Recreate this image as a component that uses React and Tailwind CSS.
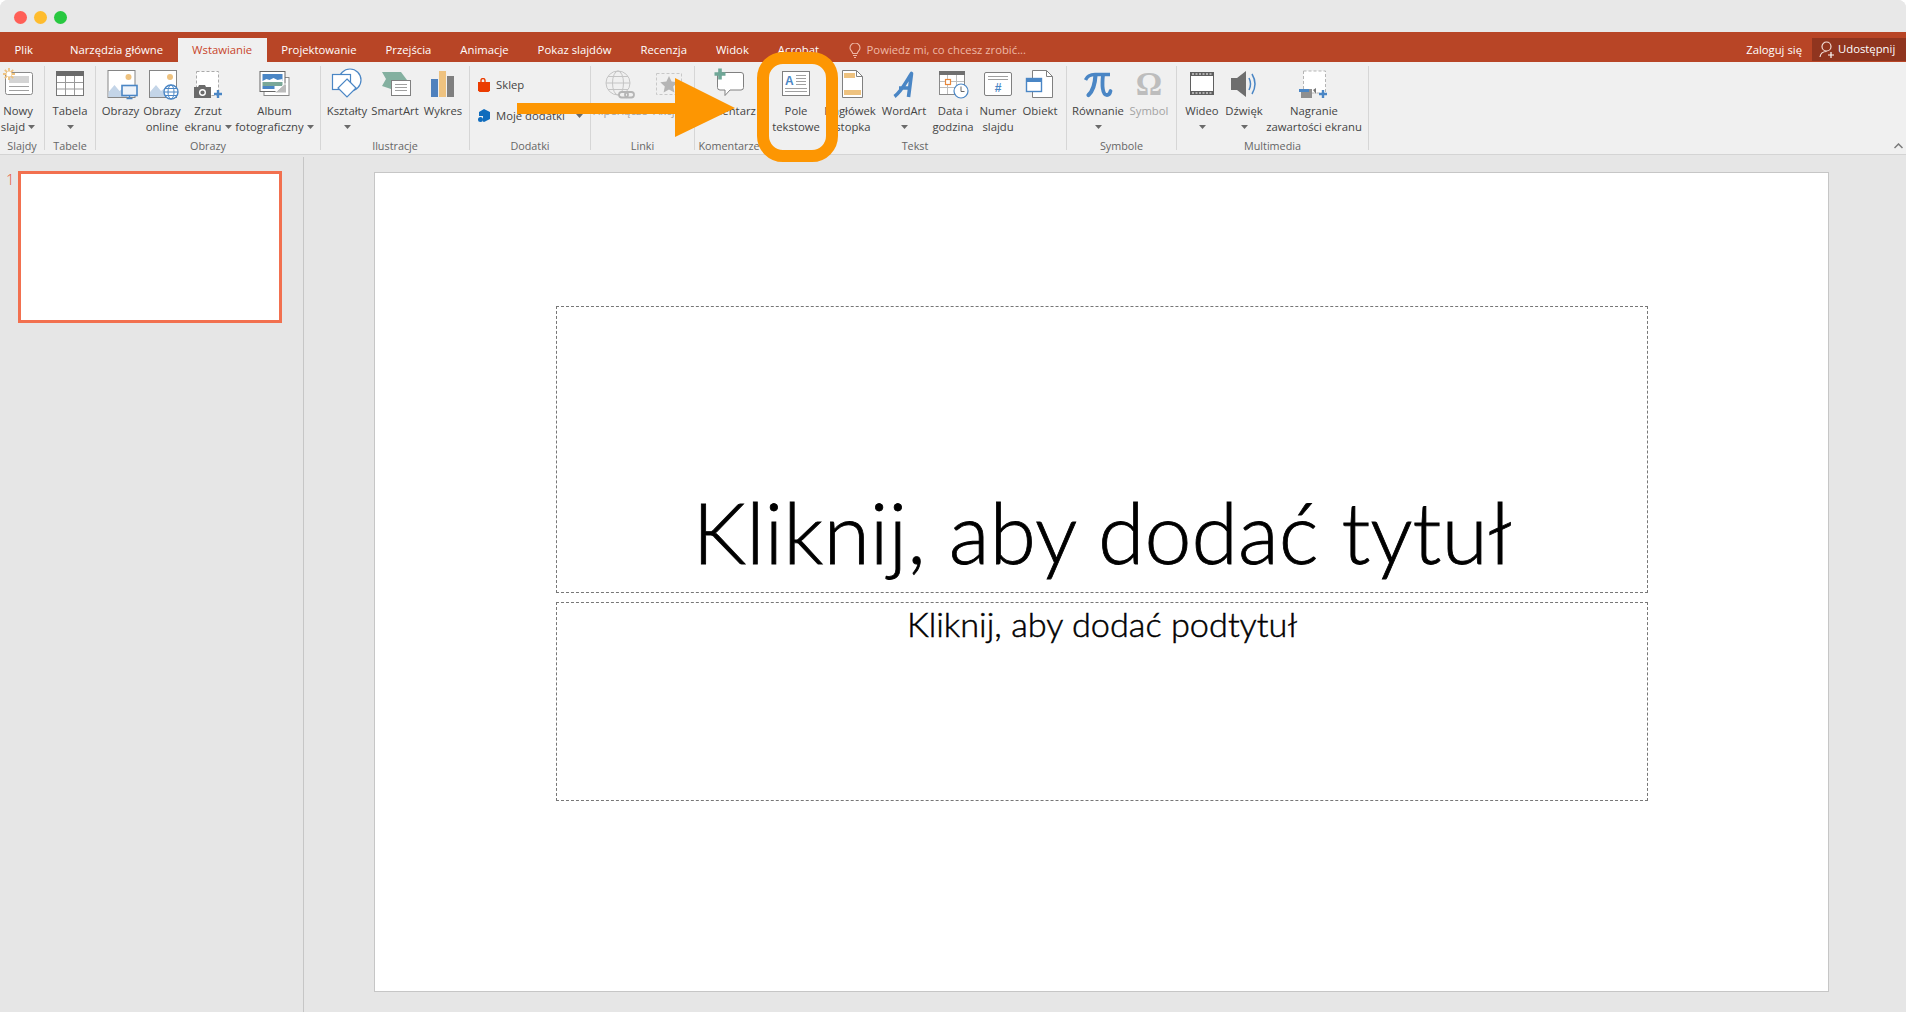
import React from "react";

const B = "#4a86c5";
const Y = "#eec27f";
const LB = "#c4d5e8";

function Caret() {
  return (
    <svg width="7" height="4" viewBox="0 0 7 4" className="shrink-0">
      <path d="M0 0h7L3.5 4z" fill="#6a6a6a" />
    </svg>
  );
}

function Lines({ x1, x2, ys, c = "#a0a0a0" }) {
  return ys.map((y) => <path key={y} d={`M${x1} ${y}H${x2}`} stroke={c} strokeWidth="1" />);
}

function Item({ w, cx, lines, caret, disabled, children }) {
  const color = disabled ? "text-[#a3a3a3]" : "text-[#444444]";
  return (
    <div className={`flex flex-col items-center shrink-0 ${color}`} style={{ width: w }}>
      <svg width="60" height="36" viewBox={`${cx - 30} 66 60 36`} className="shrink-0 overflow-visible mb-[1px]">
        {children}
      </svg>
      {lines.map((l, i) => (
        <div key={i} className="h-[16px] leading-[16px] whitespace-nowrap flex items-center gap-[3px]">
          <span>{l}</span>
          {caret === "inline" && i === lines.length - 1 && <Caret />}
        </div>
      ))}
      {caret === "below" && (
        <div className="h-[16px] flex items-center">
          <Caret />
        </div>
      )}
    </div>
  );
}

function Group({ w, label, children }) {
  return (
    <div className="h-[84px] shrink-0 flex flex-col border-r border-[#d6d6d6]" style={{ width: w }}>
      <div className="flex flex-1 min-h-0">{children}</div>
      <div className="h-[12px] leading-[16px] text-center text-[#666666] text-[10.8px] whitespace-nowrap">{label}</div>
    </div>
  );
}

function Frame({ x, sunX }) {
  return (
    <>
      <rect x={x + 0.5} y="70.5" width="27" height="27" fill="#fff" stroke="#858585" />
      <circle cx={sunX} cy="77" r="3" fill={Y} />
      <path d={`M${x + 1} 97V92l6-7 5 6 4-3 4 9z`} fill={LB} />
    </>
  );
}

function Ribbon() {
  return (
    <div className="h-[93px] shrink-0 bg-[#f0f0f0] border-b border-[#d4d4d4] pt-[4px] flex relative text-[11.3px]">
      <Group w={45} label="Slajdy">
        <Item w={36} cx={18} lines={["Nowy", "slajd"]} caret="inline">
          <rect x="5.5" y="72.5" width="27" height="22" rx="2" fill="#fff" stroke="#8a8a8a" />
          <rect x="9" y="76" width="20" height="7" fill="#d4d4d4" />
          <Lines x1={9} x2={29} ys={[86.5, 90.5]} />
          <path d="M9 68v12M3 74h12M4.8 69.8l8.4 8.4M13.2 69.8l-8.4 8.4" stroke={Y} strokeWidth="1.8" />
          <circle cx="9" cy="74" r="2.5" fill="#fff" />
        </Item>
      </Group>
      <Group w={51} label="Tabele">
        <Item w={50} cx={70} lines={["Tabela"]} caret="below">
          <rect x="56.5" y="71.5" width="27" height="24" fill="#fff" stroke="#777" />
          <rect x="56" y="71" width="28" height="5" fill="#6b6b6b" />
          <path d="M65.5 76v19M74.5 76v19M57 82.5h26M57 89h26" stroke="#9a9a9a" />
        </Item>
      </Group>
      <Group w={225} label="Obrazy">
        <div className="w-[4px] shrink-0" />
        <Item w={41} cx={120.5} lines={["Obrazy"]}>
          <Frame x={107} sunX={128} />
          <rect x="121.5" y="85.5" width="15" height="10" fill="#eef3f9" stroke={B} strokeWidth="1.6" />
          <path d="M129 96v2M126 98.5h6" stroke={B} strokeWidth="1.4" />
        </Item>
        <Item w={42} cx={162} lines={["Obrazy", "online"]}>
          <Frame x={149} sunX={170} />
          <circle cx="171" cy="92" r="7" fill="#fff" stroke={B} strokeWidth="1.4" />
          <ellipse cx="171" cy="92" rx="3" ry="7" fill="none" stroke={B} />
          <path d="M164 92h14M165 88.5h12M165 95.5h12" stroke={B} />
        </Item>
        <Item w={50} cx={208} lines={["Zrzut", "ekranu"]} caret="inline">
          <rect x="196.5" y="71.5" width="22" height="24" fill="#fff" stroke="#aaa" strokeDasharray="3 2" />
          <path d="M194 87h4l1-2h6l1 2h5v11h-17z" fill="#6b6b6b" />
          <circle cx="202.5" cy="92.5" r="2.8" fill="none" stroke="#fff" strokeWidth="1.4" />
          <path d="M214 94h8M218 90v8" stroke={B} strokeWidth="2.4" />
        </Item>
        <Item w={83} cx={274.5} lines={["Album", "fotograficzny"]} caret="inline">
          <rect x="263.5" y="77.5" width="25" height="18" fill="#fff" stroke="#888" />
          <rect x="259.5" y="71.5" width="25" height="20" fill="#fff" stroke="#666" />
          <rect x="262" y="74" width="20" height="7" fill={B} />
          <path d="M262 81l4-2 3 1 4-2 4 2 5-1v3h-20z" fill="#fff" />
          <rect x="262" y="82" width="20" height="4" fill="#7aa898" />
          <rect x="262" y="86" width="12" height="3" fill={B} />
          <path d="M274 93l10-9h2v9z" fill="#bbb" stroke="#fff" />
        </Item>
      </Group>
      <Group w={149} label="Ilustracje">
        <Item w={52} cx={347} lines={["Kształty"]} caret="below">
          <circle cx="350" cy="80" r="11" fill="#fff" stroke={B} strokeWidth="1.2" />
          <rect x="332.5" y="74.5" width="18" height="15" fill="#fff" stroke={B} strokeWidth="1.2" />
          <path d="M347 79l9 9-9 9-9-9z" fill="#fff" stroke={B} strokeWidth="1.2" />
        </Item>
        <Item w={44} cx={395} lines={["SmartArt"]}>
          <path d="M382 72h19l6 8h-16v9l-9-3 4-7z" fill="#84b0a0" />
          <rect x="391.5" y="80.5" width="19" height="15" fill="#fff" stroke="#808080" />
          <Lines x1={395} x2={407} ys={[84.5, 87.5, 90.5]} />
        </Item>
        <Item w={52} cx={443} lines={["Wykres"]}>
          <rect x="431" y="79" width="7" height="18" fill="#4f81bd" />
          <rect x="439" y="71" width="7" height="26" fill={Y} />
          <rect x="447" y="76" width="7" height="21" fill="#7f7f7f" />
        </Item>
      </Group>
      <Group w={121} label="Dodatki">
        <div className="flex flex-col pl-[8px] pt-[11px] gap-[15px] text-[#444444]">
          <div className="h-[16px] flex items-center gap-[6px]">
            <svg width="12" height="14" viewBox="0 0 12 14">
              <path d="M0 4h12v8.500L10.500 14H1.500L0 12.500z" fill="#eb3c00" />
              <path d="M3 5V2.500a2 2 0 0 1 4 0V5" fill="none" stroke="#eb3c00" strokeWidth="1.400" />
            </svg>
            <span className="leading-[16px]">Sklep</span>
          </div>
          <div className="h-[16px] flex items-center gap-[6px] relative">
            <svg width="12" height="14" viewBox="0 0 12 14">
              <path d="M6 0l6 3v7l-6 3-1-.5V7H1V3z" fill="#0f6cbd" />
              <circle cx="2.500" cy="10.500" r="2.500" fill="#0f6cbd" />
            </svg>
            <span className="leading-[16px] whitespace-nowrap">Moje dodatki</span>
            <div className="ml-[5px]"><Caret /></div>
          </div>
        </div>
      </Group>
      <Group w={104} label="Linki">
        <Item w={58} cx={620} lines={["Hiperłącze"]} disabled>
          <circle cx="618" cy="83" r="12" fill="none" stroke="#c4c4c4" />
          <ellipse cx="618" cy="83" rx="5.500" ry="12" fill="none" stroke="#c4c4c4" />
          <path d="M606 83h24M608 76.500h20M608 89.500h20" stroke="#c4c4c4" />
          <rect x="619" y="92" width="9" height="5.500" rx="2.700" fill="#f0f0f0" stroke="#b5b5b5" strokeWidth="1.800" />
          <rect x="625" y="92" width="9" height="5.500" rx="2.700" fill="none" stroke="#b5b5b5" strokeWidth="1.800" />
        </Item>
        <Item w={36} cx={667} lines={["Akcja"]} disabled>
          <rect x="656.500" y="73.500" width="25" height="21" fill="none" stroke="#c8c8c8" strokeDasharray="3 2" />
          <path d="M669 76l2.600 5.600 6.100.7-4.500 4.200 1.200 6-5.400-3-5.400 3 1.200-6-4.500-4.200 6.100-.7z" fill="#b5b5b5" />
        </Item>
      </Group>
      <Group w={69} label="Komentarze">
        <Item w={64} cx={727} lines={["Komentarz"]}>
          <path d="M720 72.500h21a2.500 2.500 0 0 1 2.500 2.500v12.500a2.500 2.500 0 0 1-2.500 2.500H730l-5 5.500V90h-5a2.500 2.500 0 0 1-2.500-2.500V75a2.500 2.500 0 0 1 2.500-2.500z" fill="#fff" stroke="#808080" />
          <path d="M714.500 74h11M720 68.500v11" stroke="#6fa797" strokeWidth="3.600" />
        </Item>
      </Group>
      <Group w={303} label="Tekst">
        <Item w={64} cx={796} lines={["Pole", "tekstowe"]}>
          <rect x="782.500" y="71.500" width="27" height="24" fill="#fff" stroke="#7f7f7f" />
          <text x="785" y="85" fontFamily="Liberation Sans" fontWeight="700" fontSize="12" fill={B}>A</text>
          <Lines x1={796} x2={806} ys={[75.5, 78.5, 81.5, 84.5]} />
          <Lines x1={785} x2={807} ys={[88.5, 91.5]} />
        </Item>
        <Item w={44} cx={850} lines={["Nagłówek", "i stopka"]}>
          <path d="M842.500 70.500h14l6 6v21h-20z" fill="#fff" stroke="#808080" />
          <path d="M856.500 70.500v6h6" fill="none" stroke="#808080" />
          <rect x="844" y="73" width="11" height="5" fill={Y} />
          <rect x="844" y="90" width="17" height="5" fill={Y} />
        </Item>
        <Item w={64} cx={904} lines={["WordArt"]} caret="below">
          <path d="M894.500 96.500C901 92 906 82 911.500 73.500L908.500 97M899 88h10" fill="none" stroke={B} strokeWidth="3.600" strokeLinejoin="round" />
        </Item>
        <Item w={34} cx={953} lines={["Data i", "godzina"]}>
          <rect x="939.500" y="71.500" width="25" height="23" fill="#fff" stroke="#8a8a8a" />
          <rect x="939" y="71" width="26" height="4" fill="#6f6f6f" />
          <path d="M947.500 75v19M956.500 75v19M940 81.500h24M940 87.500h24" stroke="#bdbdbd" />
          <rect x="945.500" y="79.500" width="5" height="5" fill="#fff" stroke="#e8873a" strokeWidth="1.200" />
          <circle cx="961" cy="91" r="7" fill="#fff" stroke={B} strokeWidth="1.200" />
          <path d="M961 86.500V91.500h3.500" fill="none" stroke="#666" />
        </Item>
        <Item w={56} cx={998} lines={["Numer", "slajdu"]}>
          <rect x="984.500" y="72.500" width="27" height="23" rx="1.500" fill="#fff" stroke="#808080" />
          <Lines x1={988} x2={1008} ys={[76.5, 79.5]} />
          <text x="998" y="92" textAnchor="middle" fontFamily="Liberation Sans" fontWeight="700" fontSize="12" fill={B}>#</text>
        </Item>
        <Item w={28} cx={1040} lines={["Obiekt"]}>
          <path d="M1032.500 70.500h14l6 6v21h-20z" fill="#fff" stroke="#808080" />
          <path d="M1046.500 70.500v6h6" fill="none" stroke="#808080" />
          <rect x="1026.500" y="78.500" width="15" height="13" fill="#fff" stroke={B} strokeWidth="1.400" />
          <rect x="1026" y="78" width="16" height="4" fill={B} />
        </Item>
      </Group>
      <Group w={110} label="Symbole">
        <Item w={62} cx={1098} lines={["Równanie"]} caret="below">
          <path d="M1085.500 80C1087.500 75 1091 74.500 1095 74.500H1110" fill="none" stroke={B} strokeWidth="3.400" />
          <path d="M1095.500 75C1095 84 1093 91 1088.500 95" fill="none" stroke={B} strokeWidth="4.200" strokeLinecap="round" />
          <path d="M1103 75C1102 84 1102 95 1107 95C1108.500 95 1110 93.500 1110.500 91" fill="none" stroke={B} strokeWidth="3.800" strokeLinecap="round" />
        </Item>
        <Item w={40} cx={1149} lines={["Symbol"]} disabled>
          <text x="1149" y="95" textAnchor="middle" fontFamily="Liberation Serif" fontWeight="700" fontSize="33" fill="#bdbdbd">Ω</text>
        </Item>
      </Group>
      <Group w={192} label="Multimedia">
        <Item w={50} cx={1202} lines={["Wideo"]} caret="below">
          <rect x="1190.500" y="72.500" width="23" height="22" fill="#fff" stroke="#5f5f5f" />
          <rect x="1190" y="72" width="24" height="4" fill="#5f5f5f" />
          <rect x="1190" y="91" width="24" height="4" fill="#5f5f5f" />
          <path d="M1192 74h20M1192 93h20" stroke="#fff" strokeDasharray="2 1.500" />
        </Item>
        <Item w={34} cx={1244} lines={["Dźwięk"]} caret="below">
          <path d="M1231 78h6l9-7v26l-9-7h-6z" fill="#6e6e6e" />
          <path d="M1249 78q3 6 0 12M1252 74q6 10 0 20" fill="none" stroke={B} strokeWidth="1.500" />
        </Item>
        <Item w={106} cx={1314} lines={["Nagranie", "zawartości ekranu"]}>
          <rect x="1303.500" y="71" width="22" height="22" fill="#fff" stroke="#b5b5b5" strokeDasharray="3 2" />
          <rect x="1301" y="89" width="11" height="9" fill="#8f8f8f" />
          <path d="M1299 90.500h10" stroke={B} strokeWidth="3" />
          <path d="M1313 90l3-2v6z" fill="#777" />
          <path d="M1319 94h8M1323 90v8" stroke={B} strokeWidth="2.400" />
        </Item>
      </Group>
      <svg width="9" height="6" viewBox="0 0 9 6" className="absolute right-[3px] bottom-[5px]">
        <path d="M0.500 5L4.500 1L8.500 5" fill="none" stroke="#7a7a7a" strokeWidth="1.500" />
      </svg>
    </div>
  );
}

const tabs = [
  ["Plik", "mr-[8px] text-white"],
  ["Narzędzia główne", "text-white"],
  ["Wstawianie", "bg-[#f0f0f0] text-[#c8442a]"],
  ["Projektowanie", "text-white"],
  ["Przejścia", "text-white"],
  ["Animacje", "text-white"],
  ["Pokaz slajdów", "text-white"],
  ["Recenzja", "text-white"],
  ["Widok", "text-white"],
  ["Acrobat", "text-white"],
];

export default function App() {
  return (
    <div className="w-[1906px] h-[1012px] relative overflow-hidden bg-white font-['Open_Sans','Noto_Sans',sans-serif]">
      <div className="w-full h-full rounded-t-[8px] overflow-hidden bg-[#e6e6e6] flex flex-col">
        <div className="h-[32px] shrink-0 bg-[#e8e8e8] flex items-center gap-[7px] pl-[14px] pt-[2px]">
          <div className="w-[13px] h-[13px] rounded-full bg-[#ff5f57]" />
          <div className="w-[13px] h-[13px] rounded-full bg-[#febc2e]" />
          <div className="w-[13px] h-[13px] rounded-full bg-[#28c840]" />
        </div>
        <div className="h-[30px] shrink-0 bg-[#b84526] flex pt-[6px] text-[11.3px]">
          {tabs.map(([t, c]) => (
            <div key={t} className={`h-[24px] leading-[24px] px-[14.5px] whitespace-nowrap ${c}`}>
              {t}
            </div>
          ))}
          <div className="h-[24px] flex items-center gap-[6px] ml-[15px] text-[#eeb9a7]">
            <svg width="12" height="15" viewBox="0 0 12 15" fill="none" stroke="#eeb9a7" strokeWidth="1.100">
              <path d="M3.800 10.500C3.600 8.500 1 7.500 1 5a5 5 0 0 1 10 0c0 2.500-2.600 3.500-2.800 5.500z" />
              <path d="M4 12.500h4M5 14.500h2" />
            </svg>
            <span>Powiedz mi, co chcesz zrobić...</span>
          </div>
          <div className="ml-auto h-[24px] leading-[24px] text-white mr-[10px] whitespace-nowrap">Zaloguj się</div>
          <div className="h-[23px] w-[94px] bg-[#90351f] flex items-center gap-[3px] pl-[7px] text-white">
            <svg width="16" height="17" viewBox="0 0 16 17" fill="none" stroke="#f3ddd6" strokeWidth="1.200">
              <circle cx="7.500" cy="5.500" r="4.500" />
              <path d="M1 16c.5-3.500 2.500-5.500 6.500-5.500" />
              <path d="M9 14h6M12 11v6" stroke="#fff" />
            </svg>
            <span>Udostępnij</span>
          </div>
        </div>
        <Ribbon />
        <div className="flex-1 min-h-0 flex">
          <div className="w-[304px] shrink-0 mt-[2px] border-r border-[#c6c6c6] flex items-start gap-[6px] pl-[6px] pt-[14px]">
            <div className="w-[6px] text-[#e8593a] text-[15px] font-light leading-[16px]">1</div>
            <div className="w-[264px] h-[152px] bg-white border-[3px] border-[#f2704f]" />
          </div>
          <div className="flex-1 min-w-0 pl-[70px] pt-[17px]">
            <div className="w-[1455px] h-[820px] bg-white border border-[#c6c6c6] pl-[181px] pt-[133px] flex flex-col gap-[9px]">
              <div className="w-[1092px] h-[287px] border border-dashed border-[#777777] flex items-end justify-center pb-[6px] text-black font-['Lato','Open_Sans',sans-serif] font-light text-[84.3px] leading-[108px] whitespace-nowrap [-webkit-text-stroke:0.8px_black]">
                Kliknij, aby dodać tytuł
              </div>
              <div className="w-[1092px] h-[199px] border border-dashed border-[#777777] flex justify-center text-black font-['Lato','Open_Sans',sans-serif] font-light text-[34.3px] leading-[42px] whitespace-nowrap [-webkit-text-stroke:0.5px_black]">
                Kliknij, aby dodać podtytuł
              </div>
            </div>
          </div>
        </div>
      </div>
      <svg width="230" height="70" viewBox="510 73 230 70" className="absolute left-[510px] top-[73px]">
        <path d="M517 103H675V78L735 108L675 137V114H517z" fill="#fd9602" />
      </svg>
      <div className="absolute left-[757px] top-[52px] w-[81px] h-[110px] rounded-[26px] border-[12px] border-[#fd9602]" />
    </div>
  );
}
